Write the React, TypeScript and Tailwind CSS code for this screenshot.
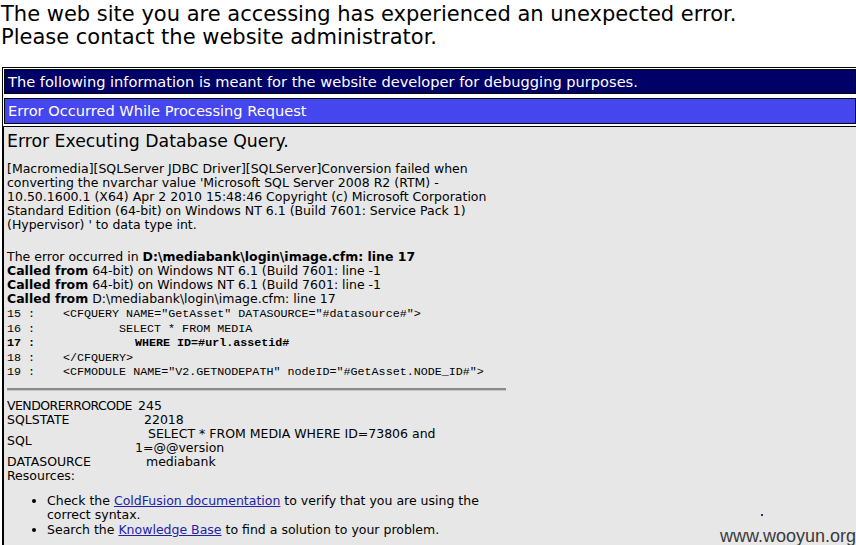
const sans = 'font-["DejaVu_Sans",Verdana,sans-serif]';
const mono = 'font-["Liberation_Mono",monospace]';

const codeLines = [
  { n: '15 :', indent: 'pl-0', text: '<CFQUERY NAME="GetAsset" DATASOURCE="#datasource#">', bold: false },
  { n: '16 :', indent: 'pl-[56px]', text: 'SELECT * FROM MEDIA', bold: false },
  { n: '17 :', indent: 'pl-[72px]', text: 'WHERE ID=#url.assetid#', bold: true },
  { n: '18 :', indent: 'pl-0', text: '</CFQUERY>', bold: false },
  { n: '19 :', indent: 'pl-0', text: '<CFMODULE NAME="V2.GETNODEPATH" nodeID="#GetAsset.NODE_ID#">', bold: false },
];

const App = () => {
  return (
    <div className={`min-h-[545px] bg-white overflow-hidden ${sans}`}>
      <div className="pt-[3px] pl-[1px] text-[21px] leading-[23px] text-black">
        The web site you are accessing has experienced an unexpected error.
        <br />
        Please contact the website administrator.
      </div>

      <div className="mt-[18px] ml-[2px] border-t border-l border-black pt-[1px] pl-[1px] flex flex-col">
        <div className="h-[25px] bg-[#000066] border border-[#000808] flex items-center pl-[3px] text-[14.6px] text-white">
          The following information is meant for the website developer for debugging purposes.
        </div>
        <div className="mt-[4px] h-[26px] bg-[#4646EE] border border-[#000808] flex items-center pl-[3px] text-[14.6px] text-white">
          Error Occurred While Processing Request
        </div>
        <div className="mt-[2px] ml-[-1px] bg-[#E7E7E7] border-t border-l border-black pl-[3px] pt-[2px] h-[440px] text-black">
          <h1 className="text-[17.3px] leading-[24px]">Error Executing Database Query.</h1>

          <div className="mt-[9px] text-[12.5px] leading-[14px] w-[480px]">
            [Macromedia][SQLServer JDBC Driver][SQLServer]Conversion failed when converting the nvarchar value
            'Microsoft SQL Server 2008 R2 (RTM) - 10.50.1600.1 (X64) Apr 2 2010 15:48:46 Copyright (c) Microsoft
            Corporation Standard Edition (64-bit) on Windows NT 6.1 (Build 7601: Service Pack 1) (Hypervisor) ' to
            data type int.
          </div>

          <div className="mt-[18px] text-[12.5px] leading-[14px]">
            <div>
              The error occurred in <b>D:\mediabank\login\image.cfm: line 17</b>
            </div>
            <div>
              <b>Called from</b> 64-bit) on Windows NT 6.1 (Build 7601: line -1
            </div>
            <div>
              <b>Called from</b> 64-bit) on Windows NT 6.1 (Build 7601: line -1
            </div>
            <div>
              <b>Called from</b> D:\mediabank\login\image.cfm: line 17
            </div>
          </div>

          <div className={`mt-[1px] text-[11.7px] leading-[14.6px] ${mono}`}>
            {codeLines.map((l) => (
              <div key={l.n} className={`flex whitespace-pre ${l.bold ? 'font-bold' : ''}`}>
                <span className="w-[56px] shrink-0">{l.n}</span>
                <span className={l.indent}>{l.text}</span>
              </div>
            ))}
          </div>

          <div className="mt-[8px] w-[499px] h-[3px] bg-[#8a8a8a] border-b border-[#c8c8c8]" />

          <div className="mt-[8px] text-[12.5px] leading-[14px]">
            <div className="flex">
              <span className="w-[131px] shrink-0 tracking-[-0.55px]">VENDORERRORCODE</span>
              <span>245</span>
            </div>
            <div className="flex">
              <span className="w-[131px] shrink-0">SQLSTATE</span>
              <span className="pl-[6px]">22018</span>
            </div>
            <div className="flex items-center">
              <span className="w-[128px] shrink-0">SQL</span>
              <span className="w-[320px]">
                <span className="pl-[13px]">SELECT * FROM MEDIA WHERE ID=73806 and</span>
                <br />
                1=@@version
              </span>
            </div>
            <div className="flex">
              <span className="w-[131px] shrink-0">DATASOURCE</span>
              <span className="pl-[8px]">mediabank</span>
            </div>
            <div>Resources:</div>
          </div>

          <ul className="mt-[11px] pl-[40px] list-disc text-[12.5px] leading-[14.5px] w-[488px]">
            <li>
              Check the{' '}
              <a href="#" className="text-[#2222AA] underline">
                ColdFusion documentation
              </a>{' '}
              to verify that you are using the correct syntax.
            </li>
            <li>
              Search the{' '}
              <a href="#" className="text-[#2222AA] underline">
                Knowledge Base
              </a>{' '}
              to find a solution to your problem.
            </li>
          </ul>
        </div>
      </div>

      <div className="absolute left-[761px] top-[514px] w-[2px] h-[2px] bg-[#2a2a6a]" />
      <div className='absolute left-[720px] top-[526px] text-[18px] leading-[20px] text-[#3a3a3a] font-["Liberation_Sans",Arial,sans-serif]'>
        www.wooyun.org
      </div>
    </div>
  );
};

export default App;
